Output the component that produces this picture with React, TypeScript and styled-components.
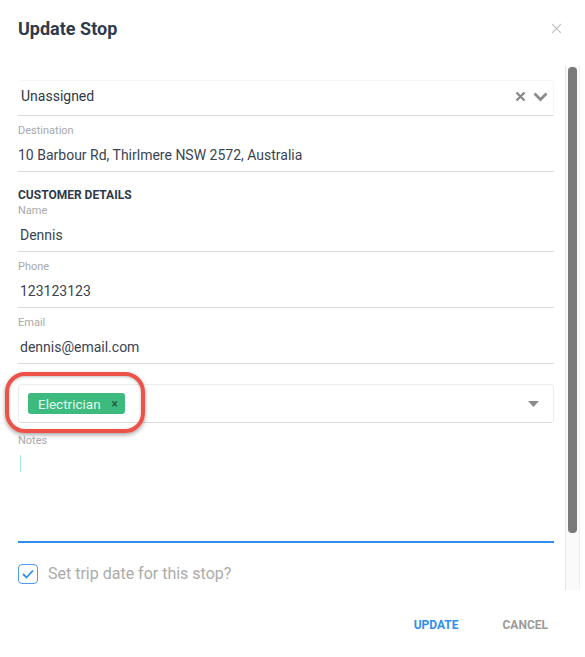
import React from "react";
import styled, { createGlobalStyle } from "styled-components";

const GlobalStyle = createGlobalStyle`
  html, body {
    margin: 0;
    padding: 0;
    background: #fff;
    font-family: Roboto, "Liberation Sans", Arial, sans-serif;
  }
`;

const Modal = styled.div`
  width: 585px;
  height: 657px;
  display: flex;
  flex-direction: column;
  background: #fff;
  overflow: hidden;
`;

const Header = styled.div`
  height: 66px;
  flex-shrink: 0;
  display: flex;
  align-items: flex-start;
  justify-content: space-between;
  padding: 18px 22px 0 18px;
  box-sizing: border-box;
`;

const Title = styled.h2`
  margin: 0;
  font-size: 18px;
  line-height: 22px;
  font-weight: 700;
  color: #2f3a4b;
`;

const CloseButton = styled.button`
  border: none;
  background: none;
  padding: 0;
  margin-top: 5px;
  width: 12px;
  height: 12px;
  display: flex;
  cursor: pointer;
`;

const Body = styled.div`
  height: 524px;
  flex-shrink: 0;
  display: flex;
  margin-right: 5px;
`;

const Content = styled.div`
  flex: 1;
  min-width: 0;
  overflow: hidden;
  padding: 14px 11px 0 18px;
`;

const ScrollTrack = styled.div`
  width: 15px;
  flex-shrink: 0;
  box-sizing: border-box;
  background: #fafafa;
  border-left: 1px solid #e8e8e8;
  border-right: 1px solid #f0f0f0;
  padding: 1px 2px 0 2px;
`;

const ScrollThumb = styled.div`
  height: 466px;
  background: #7a7a7a;
  border-radius: 4px;
`;

const SelectRow = styled.div`
  height: 36px;
  display: flex;
  align-items: flex-start;
  justify-content: space-between;
  padding: 5px 5px 0 3px;
  box-sizing: border-box;
  border-top: 1px solid #f6f6f6;
  border-right: 1px solid #f6f6f6;
  border-bottom: 1px solid #d9d9d9;
  border-radius: 3px 3px 0 0;
`;

const SelectValue = styled.span`
  font-size: 14px;
  line-height: 20px;
  color: #303844;
`;

const SelectIcons = styled.span`
  display: flex;
  align-items: center;
  gap: 7px;
  height: 20px;
`;

const Field = styled.div<{ $tight?: boolean }>`
  padding-top: ${(p) => (p.$tight ? "2px" : "8px")};
  padding-bottom: 6px;
  border-bottom: 1px solid #d9d9d9;
`;

const Label = styled.div`
  font-size: 11px;
  line-height: 13px;
  color: #a9a9a9;
`;

const Value = styled.div<{ $inset?: boolean }>`
  margin-top: 8px;
  font-size: 14px;
  line-height: 20px;
  color: #3a4352;
  padding-left: ${(p) => (p.$inset ? "2px" : "0")};
`;

const SectionHeading = styled.div`
  margin-top: 16px;
  font-size: 12px;
  line-height: 14px;
  font-weight: 700;
  color: #2f3a4b;
`;

const TagWrap = styled.div`
  position: relative;
  margin-top: 20px;
`;

const TagBox = styled.div`
  height: 39px;
  display: flex;
  align-items: center;
  justify-content: space-between;
  padding: 0 14px 0 9px;
  box-sizing: border-box;
  border: 1px solid #ececec;
  border-bottom-color: #dcdcdc;
  border-radius: 4px;
`;

const Chip = styled.span`
  display: inline-flex;
  align-items: center;
  gap: 11px;
  height: 21px;
  padding: 0 7px 0 10px;
  background: #3dba7e;
  border-radius: 3px;
  font-size: 13.5px;
  color: #e2f8ec;
`;

const ChipRemove = styled.span`
  font-size: 12px;
  font-weight: 700;
  color: #2b5a44;
  line-height: 1;
`;

const Highlight = styled.div`
  position: absolute;
  left: -13px;
  top: -12px;
  width: 140px;
  height: 61px;
  border: 4px solid #ec5247;
  border-radius: 20px;
  box-sizing: border-box;
  box-shadow: 0 2px 4px rgba(0, 0, 0, 0.35), inset 0 1px 3px rgba(0, 0, 0, 0.25);
  pointer-events: none;
`;

const NotesField = styled.div`
  margin-top: 11px;
  border-bottom: 2px solid #2f8ff0;
  height: 107px;
`;

const Caret = styled.div`
  margin-top: 8px;
  margin-left: 2px;
  width: 1px;
  height: 17px;
  background: #a6ecd7;
`;

const CheckRow = styled.label`
  display: flex;
  align-items: center;
  gap: 10px;
  margin-top: 20px;
  height: 21px;
`;

const CheckBox = styled.span`
  width: 20px;
  height: 20px;
  box-sizing: border-box;
  border: 1.5px solid #4a9bf0;
  border-radius: 4px;
  display: flex;
  align-items: center;
  justify-content: center;
`;

const CheckLabel = styled.span`
  font-size: 16px;
  color: #ababab;
`;

const Footer = styled.div`
  flex: 1;
  display: flex;
  align-items: center;
  justify-content: flex-end;
  gap: 44px;
  padding: 2px 37px 0 0;
`;

const ActionButton = styled.button<{ $primary?: boolean }>`
  border: none;
  background: none;
  padding: 0;
  font-family: Roboto, "Liberation Sans", Arial, sans-serif;
  font-size: 12px;
  font-weight: 700;
  color: ${(p) => (p.$primary ? "#2f8ff0" : "#9a9a9a")};
  cursor: pointer;
`;

export default function App() {
  return (
    <>
      <GlobalStyle />
      <Modal>
        <Header>
          <Title>Update Stop</Title>
          <CloseButton aria-label="close">
            <svg width="11" height="11" viewBox="0 0 11 11">
              <path d="M1 1L10 10M10 1L1 10" stroke="#c4c4c4" strokeWidth="1.1" />
            </svg>
          </CloseButton>
        </Header>
        <Body>
          <Content>
            <SelectRow>
              <SelectValue>Unassigned</SelectValue>
              <SelectIcons>
                <svg width="11" height="11" viewBox="0 0 11 11">
                  <path d="M1.5 1.5L9.5 9.5M9.5 1.5L1.5 9.5" stroke="#8a8a8a" strokeWidth="2.4" />
                </svg>
                <svg width="15" height="11" viewBox="0 0 15 11">
                  <path d="M1.5 2.5L7.5 8.5L13.5 2.5" fill="none" stroke="#8a8a8a" strokeWidth="2.8" />
                </svg>
              </SelectIcons>
            </SelectRow>
            <Field>
              <Label>Destination</Label>
              <Value>10 Barbour Rd, Thirlmere NSW 2572, Australia</Value>
            </Field>
            <SectionHeading>CUSTOMER DETAILS</SectionHeading>
            <Field $tight>
              <Label>Name</Label>
              <Value $inset>Dennis</Value>
            </Field>
            <Field>
              <Label>Phone</Label>
              <Value $inset>123123123</Value>
            </Field>
            <Field>
              <Label>Email</Label>
              <Value $inset>dennis@email.com</Value>
            </Field>
            <TagWrap>
              <TagBox>
                <Chip>
                  Electrician
                  <ChipRemove>×</ChipRemove>
                </Chip>
                <svg width="11" height="6" viewBox="0 0 11 6">
                  <path d="M0 0H11L5.5 6Z" fill="#8c8c8c" />
                </svg>
              </TagBox>
              <Highlight />
            </TagWrap>
            <NotesField>
              <Label>Notes</Label>
              <Caret />
            </NotesField>
            <CheckRow>
              <CheckBox>
                <svg width="12" height="10" viewBox="0 0 12 10">
                  <path d="M1 5L4.5 8.5L11 1.5" fill="none" stroke="#2f8ff0" strokeWidth="1.8" />
                </svg>
              </CheckBox>
              <CheckLabel>Set trip date for this stop?</CheckLabel>
            </CheckRow>
          </Content>
          <ScrollTrack>
            <ScrollThumb />
          </ScrollTrack>
        </Body>
        <Footer>
          <ActionButton $primary>UPDATE</ActionButton>
          <ActionButton>CANCEL</ActionButton>
        </Footer>
      </Modal>
    </>
  );
}
